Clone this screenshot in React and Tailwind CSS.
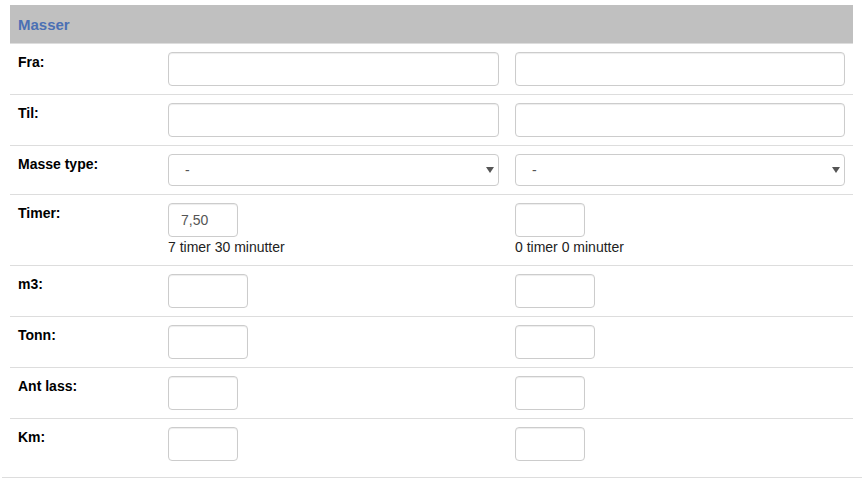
import React from "react";

function Input({ w, value }) {
  return (
    <div
      className={`h-[34px] ${w} rounded-[4px] border border-[#cccccc] bg-white px-[12px] text-[14px] leading-[32px] text-[#555555] shadow-[inset_0_1px_1px_rgba(0,0,0,0.075)]`}
    >
      {value}
    </div>
  );
}

function Select() {
  return (
    <div className="flex h-[32px] w-full items-center justify-between rounded-[4px] border border-[#cccccc] bg-white pl-[16px] pr-[4px] text-[14px] text-[#555555]">
      <span>-</span>
      <svg width="8" height="6" viewBox="0 0 8 6">
        <path d="M0 0 L8 0 L4 6 Z" fill="#555555" />
      </svg>
    </div>
  );
}

function Row({ label, a, b }) {
  return (
    <div className="flex border-t border-[#dddddd]">
      <div className="w-[150px] shrink-0 px-[8px] pt-[8px] text-[14px] font-bold leading-[20px] text-black">
        {label}
      </div>
      <div className="w-[347px] shrink-0 p-[8px]">{a}</div>
      <div className="flex-1 p-[8px]">{b}</div>
    </div>
  );
}

export default function App() {
  return (
    <div
      className="w-[867px] bg-white"
      style={{ fontFamily: '"Liberation Sans", Arial, sans-serif' }}
    >
      <div className="mx-[2px] w-[860px] border-b border-[#dddddd] px-[8px] pt-[5px] pb-[8px]">
        <div className="w-[843px]">
          <div className="h-[38px] bg-[#c0c0c0] px-[8px] pt-[1px] text-[15px] font-bold leading-[38px] text-[#4b70b4]">
            Masser
          </div>
          <Row label="Fra:" a={<Input w="w-full" />} b={<Input w="w-full" />} />
          <Row label="Til:" a={<Input w="w-full" />} b={<Input w="w-full" />} />
          <Row label="Masse type:" a={<Select />} b={<Select />} />
          <Row
            label="Timer:"
            a={
              <div>
                <Input w="w-[70px]" value="7,50" />
                <div className="text-[14px] leading-[20px] text-[#222222]">7 timer 30 minutter</div>
              </div>
            }
            b={
              <div>
                <Input w="w-[70px]" />
                <div className="text-[14px] leading-[20px] text-[#222222]">0 timer 0 minutter</div>
              </div>
            }
          />
          <Row label="m3:" a={<Input w="w-[80px]" />} b={<Input w="w-[80px]" />} />
          <Row label="Tonn:" a={<Input w="w-[80px]" />} b={<Input w="w-[80px]" />} />
          <Row label="Ant lass:" a={<Input w="w-[70px]" />} b={<Input w="w-[70px]" />} />
          <Row label="Km:" a={<Input w="w-[70px]" />} b={<Input w="w-[70px]" />} />
        </div>
      </div>
    </div>
  );
}
